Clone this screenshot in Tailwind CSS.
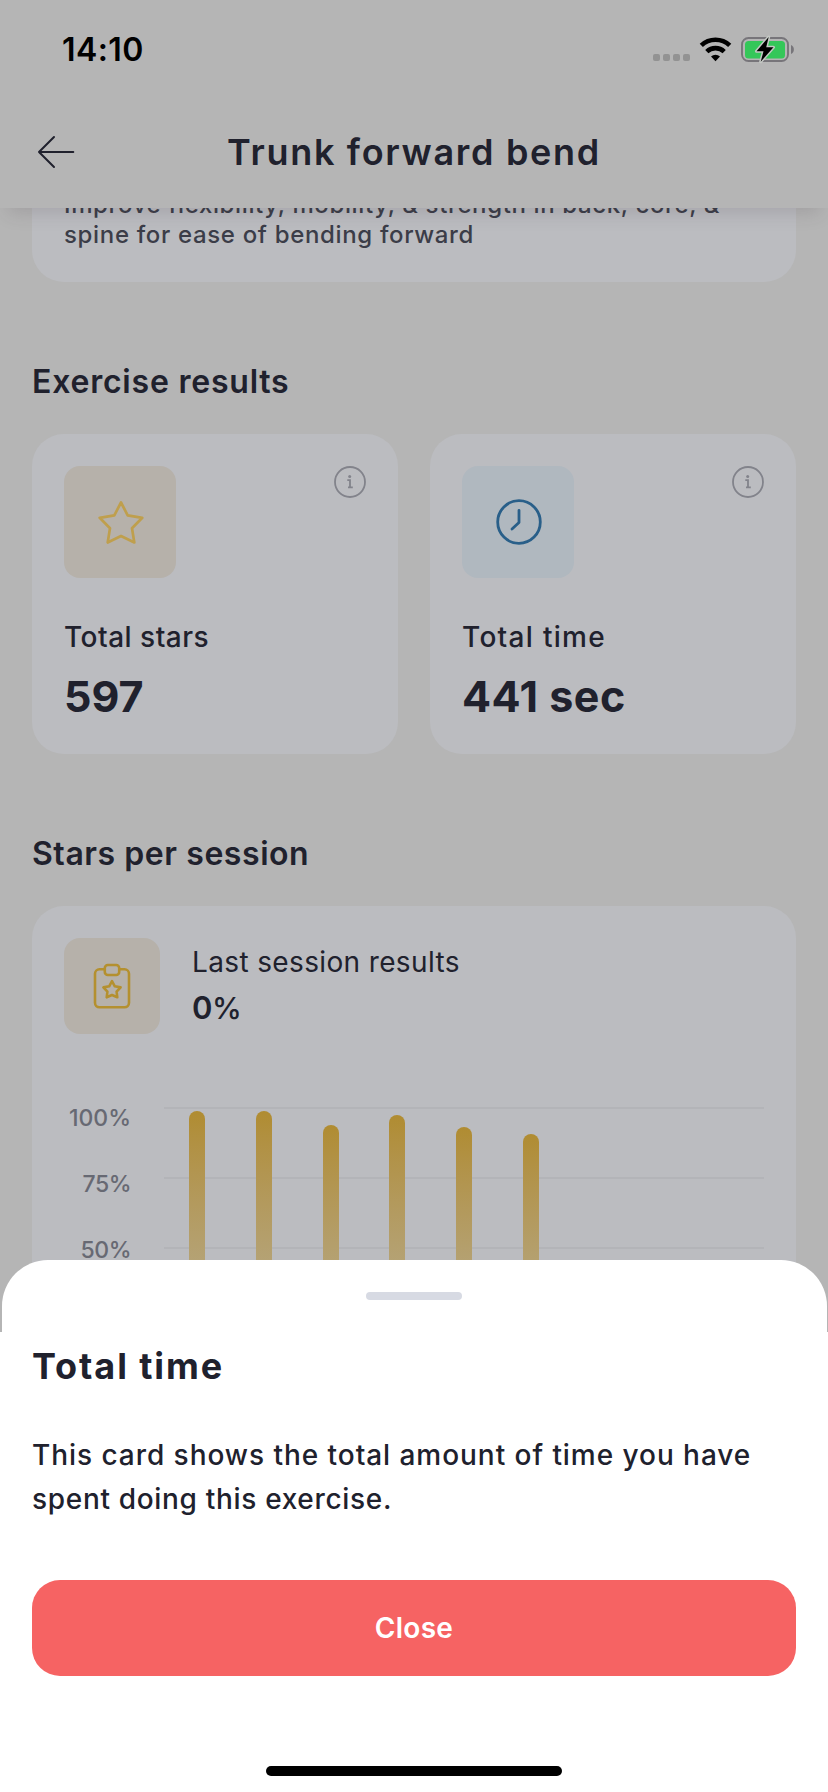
<!DOCTYPE html>
<html lang="en">
<head>
<meta charset="utf-8">
<title>Trunk forward bend</title>
<script src="https://cdn.jsdelivr.net/npm/@tailwindcss/browser@4"></script>
</head>
<body class="bg-[#b5b5b5]">
<div class="relative h-[1792px] w-[828px] overflow-hidden bg-[#b5b5b5] font-['Inter',sans-serif] text-[#20212d]">

  <!-- Header -->
  <header class="relative z-10 h-[208px] bg-[#b5b5b5] shadow-[0_12px_18px_-8px_rgba(60,50,60,0.18)]">
    <div class="flex h-[98px] items-center justify-between pl-[62px] pr-[33px] text-black">
      <span class="pt-0.5 text-[32px] leading-10 font-semibold tracking-[0.400px]">14:10</span>
      <div class="flex items-center">
        <svg width="142" height="30" viewBox="653 34 142 30">
          <g fill="#929292"><rect x="653" y="54" width="7" height="7" rx="2"/><rect x="663" y="54" width="7" height="7" rx="2"/><rect x="673" y="54" width="7" height="7" rx="2"/><rect x="683" y="54" width="7" height="7" rx="2"/></g>
          <g fill="none" stroke="#000" stroke-width="4.6">
            <path d="M701.3 45.4a20.6 20.6 0 0 1 28.4 0"/>
            <path d="M706.8 51.6a12.6 12.6 0 0 1 17.4 0"/>
          </g>
          <path d="M715.500 61.200L711 56.500A6.500 6.500 0 0 1 720 56.500Z"/>
          <rect x="742" y="38" width="46" height="23" rx="6.500" fill="none" stroke="#77757a" stroke-width="1.900"/>
          <path d="M791 45v9c3.800-1.500 3.800-7.500 0-9z" fill="#77757a"/>
          <rect x="745" y="41" width="40" height="17.500" rx="3.500" fill="#34c759"/>
          <path d="M768.700 37L756.500 51.300h7L760.700 61.700 773.500 47.300h-7.300z" fill="#000" stroke="#c4c8c4" stroke-width="3" stroke-linejoin="round" paint-order="stroke"/>
        </svg>
      </div>
    </div>
    <div class="grid h-[108px] grid-cols-[150px_1fr_150px] items-center">
      <svg class="ml-9" width="40" height="36" viewBox="36 134 40 36" fill="none" stroke="#20212d" stroke-width="2" stroke-linecap="round" stroke-linejoin="round"><path d="M73.300 152H39M54 137L39 152l15 15"/></svg>
      <h1 class="text-center text-[36px] leading-[48px] font-semibold tracking-[1.700px] whitespace-nowrap">Trunk forward bend</h1>
    </div>
  </header>

  <main class="px-8">
    <!-- Description card, scrolled under the header -->
    <section class="-mt-10 h-[114px] rounded-[32px] bg-[#bbbcc0] px-8 pt-[22px] text-[24px] leading-[30px] font-medium whitespace-nowrap text-[#3b3d48]">
      <p class="tracking-[0.620px]">Improve flexibility, mobility, &amp; strength in back, core, &amp;</p>
      <p class="tracking-[0.660px]">spine for ease of bending forward</p>
    </section>

    <h2 class="mt-20 text-[32px] leading-10 font-semibold tracking-[0.780px]">Exercise results</h2>
    <div class="mt-8 grid grid-cols-2 gap-8">
      <section class="h-80 rounded-[32px] bg-[#bbbcc0] p-8">
        <div class="flex items-start justify-between">
          <svg class="rounded-2xl bg-[#b6b1aa]" width="112" height="112" viewBox="64 466 112 112" fill="none" stroke="#bf9f4d" stroke-width="2.700" stroke-linejoin="round"><path d="M121 502.500L127.700 515.300 142.300 517.800 132 528.300 134.300 542.500 121 536 107.700 542.500 110 528.300 99.700 517.800 114.300 515.300Z"/></svg>
          <svg width="32" height="32" viewBox="0 0 32 32" fill="none" stroke="#82838b" stroke-width="1.800"><circle cx="16" cy="16" r="15"/><path d="M13.300 14.200h2.700v7.200M14 21.400h4.800"/><circle cx="15.700" cy="10.500" r="1.500" fill="#82838b" stroke="none"/></svg>
        </div>
        <p class="mt-[42px] text-[28px] leading-[34px] font-medium tracking-[0.500px]">Total stars</p>
        <p class="mt-4 text-[43px] leading-[52px] font-bold">597</p>
      </section>
      <section class="h-80 rounded-[32px] bg-[#bbbcc0] p-8">
        <div class="flex items-start justify-between">
          <svg class="rounded-2xl bg-[#b0b8bf]" width="112" height="112" viewBox="462 466 112 112" fill="none" stroke="#295f89" stroke-width="2.800" stroke-linecap="round" stroke-linejoin="round"><circle cx="519" cy="522" r="21.300"/><path d="M519 510.300V522.500L512 529"/></svg>
          <svg width="32" height="32" viewBox="0 0 32 32" fill="none" stroke="#82838b" stroke-width="1.800"><circle cx="16" cy="16" r="15"/><path d="M13.300 14.200h2.700v7.200M14 21.400h4.800"/><circle cx="15.700" cy="10.500" r="1.500" fill="#82838b" stroke="none"/></svg>
        </div>
        <p class="mt-[42px] text-[28px] leading-[34px] font-medium tracking-[1.300px]">Total time</p>
        <p class="mt-4 text-[43px] leading-[52px] font-bold tracking-[0.500px]">441 sec</p>
      </section>
    </div>

    <h2 class="mt-20 text-[32px] leading-10 font-semibold tracking-[0.560px]">Stars per session</h2>
    <section class="mt-8 h-[640px] rounded-[32px] bg-[#bbbcc0] p-8">
      <div class="flex items-start gap-8">
        <svg class="rounded-2xl bg-[#b6b1aa]" width="96" height="96" viewBox="64 938 96 96" fill="none" stroke="#b4902f" stroke-width="2.600" stroke-linejoin="round">
          <path d="M105.200 969.300H99.500a4.500 4.500 0 0 0-4.500 4.500V1002.800a4.500 4.500 0 0 0 4.500 4.500H124.500a4.500 4.500 0 0 0 4.500-4.500V973.800a4.500 4.500 0 0 0-4.500-4.500H119"/>
          <rect x="104.800" y="965" width="14.400" height="10" rx="3"/>
          <path d="M112 981.200L114.800 986.300 120.600 987.400 116.600 991.700 117.300 997.300 112 995 106.700 997.300 107.400 991.700 103.400 987.400 109.200 986.300Z"/>
        </svg>
        <div class="pt-[7px]">
          <p class="text-[28px] leading-[34px] tracking-[0.360px]">Last session results</p>
          <p class="mt-[9px] text-[31px] leading-10 font-semibold tracking-[-0.500px]">0<span class="text-[30px] font-medium">%</span></p>
        </div>
      </div>

      <!-- Chart -->
      <div class="mt-[51px] flex">
        <div class="w-[67px] text-right text-[23px] leading-[66px] font-medium whitespace-nowrap text-[#676973]">
          <p>100%</p>
          <p class="tracking-[-0.500px]">75%</p>
          <p class="tracking-[-0.500px]">50%</p>
          <p class="tracking-[-0.500px]">25%</p>
        </div>
        <div class="relative mt-[22px] ml-[33px] h-[281px] w-[600px]">
          <div class="flex h-full flex-col gap-[68px]">
            <div class="h-0.5 bg-[#b3b4b8]"></div>
            <div class="h-0.5 bg-[#b3b4b8]"></div>
            <div class="h-0.5 bg-[#b3b4b8]"></div>
            <div class="h-0.5 bg-[#b3b4b8]"></div>
          </div>
          <div class="absolute inset-0 flex items-end gap-[50.800px] pl-[25px]">
            <div class="w-4 rounded-t-full bg-linear-to-b from-[#b08c31] to-[#b8b4a3]" style="height:277px"></div>
            <div class="w-4 rounded-t-full bg-linear-to-b from-[#b08c31] to-[#b8b4a3]" style="height:277px"></div>
            <div class="w-4 rounded-t-full bg-linear-to-b from-[#b08c31] to-[#b8b4a3]" style="height:263px"></div>
            <div class="w-4 rounded-t-full bg-linear-to-b from-[#b08c31] to-[#b8b4a3]" style="height:273px"></div>
            <div class="w-4 rounded-t-full bg-linear-to-b from-[#b08c31] to-[#b8b4a3]" style="height:261px"></div>
            <div class="w-4 rounded-t-full bg-linear-to-b from-[#b08c31] to-[#b8b4a3]" style="height:254px"></div>
          </div>
        </div>
      </div>
    </section>
  </main>

  <!-- Bottom sheet -->
  <div class="absolute inset-x-0 bottom-0 z-20 h-[532px]">
    <div class="mx-[1.500px] flex h-[72px] justify-center rounded-t-[46px] bg-white pt-8">
      <div class="h-2 w-24 rounded-full bg-[#d7dae3]"></div>
    </div>
    <div class="flex h-[460px] flex-col bg-white px-8 pt-2.5">
      <h3 class="text-[36px] leading-[48px] font-bold tracking-[1.900px]">Total time</h3>
      <p class="mt-[43px] text-[28px] leading-[44px] font-medium whitespace-nowrap"><span class="tracking-[0.950px]">This card shows the total amount of time you have</span><br><span class="tracking-[0.680px]">spent doing this exercise.</span></p>
      <button class="mt-[59px] h-24 w-full rounded-[28px] bg-[#f66363] text-[28px] font-semibold tracking-[0.300px] text-white">Close</button>
      <div class="mx-auto mt-[90px] h-2.5 w-[296px] rounded-full bg-black"></div>
    </div>
  </div>
</div>
</body>
</html>
